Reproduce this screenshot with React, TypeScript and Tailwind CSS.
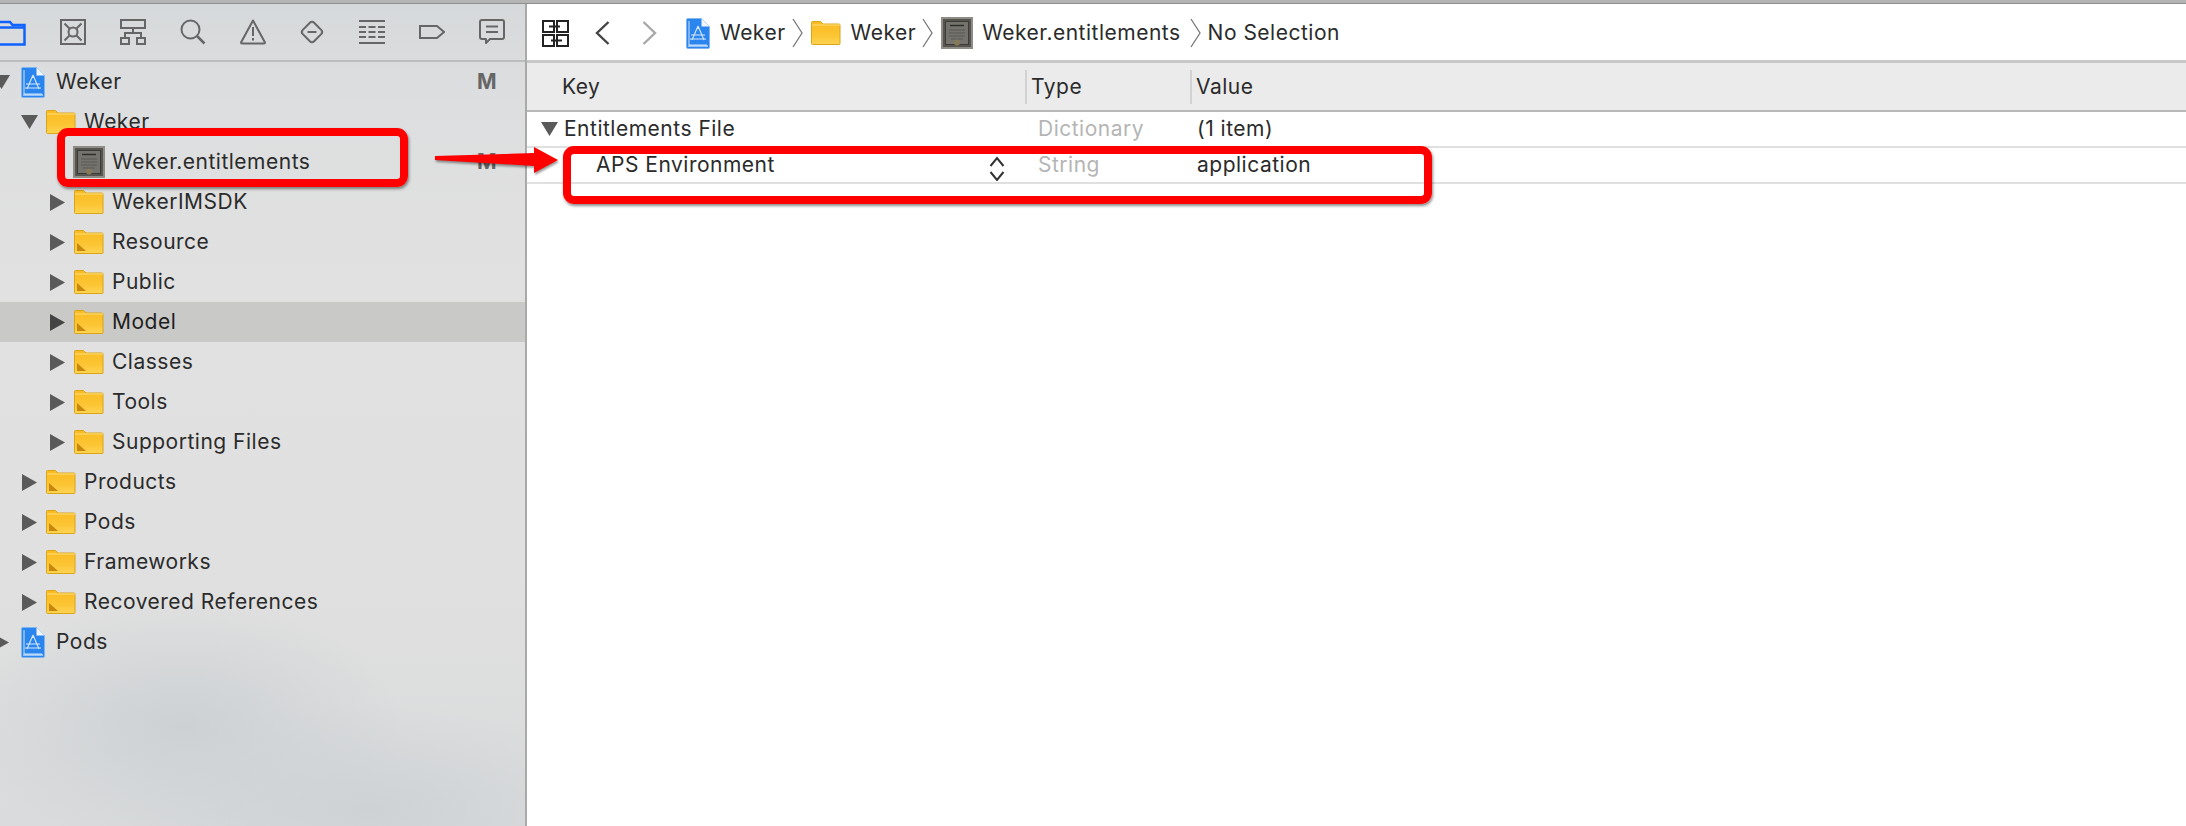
const ui = { fontFamily: 'Inter, "Liberation Sans", sans-serif' };

function FolderIcon({ group = true }: { group?: boolean }) {
  return (
    <svg width="30" height="24" viewBox="0 0 30 24">
      <defs>
        <linearGradient id="folderFill" x1="0" y1="0" x2="0" y2="1">
          <stop offset="0" stopColor="#f9bb22" />
          <stop offset="0.6" stopColor="#fcc533" />
          <stop offset="1" stopColor="#fdd453" />
        </linearGradient>
      </defs>
      <path d="M.5 3V1.500a1 1 0 0 1 1-1h8l2.500 2.500h16a1 1 0 0 1 1 1V22.500a1 1 0 0 1-1 1H1.500a1 1 0 0 1-1-1z" fill="url(#folderFill)" stroke="#dca417" />
      <path d="M1 4h28" stroke="#fee07f" strokeWidth="1" />
      {group && <path d="M3 13l9 8H3z" fill="#c9860f" />}
    </svg>
  );
}

function ProjectIcon() {
  return (
    <svg width="24" height="31" viewBox="0 0 24 31">
      <path d="M1.500.5h14l8 8V29a1.500 1.500 0 0 1-1.500 1.500H2A1.500 1.500 0 0 1 .5 29V2A1.500 1.500 0 0 1 1.500.5z" fill="#2a85ee" stroke="#7fb6ee" />
      <path d="M15.500.5v8h8z" fill="#f2f6fb" />
      <path d="M3 3v24M3 27h18" stroke="#cfe3fa" strokeWidth="1" fill="none" />
      <path d="M12 8l-6 14M12 8l6 14M5 17h14M4 21h16M12 8v3" stroke="#d7e8fb" strokeWidth="1.100" fill="none" />
      <path d="M2 28h20" stroke="#ffffff" strokeWidth="1" />
    </svg>
  );
}

function CertIcon() {
  return (
    <svg width="32" height="32" viewBox="0 0 32 32">
      <rect width="32" height="32" fill="#8e8c85" />
      <rect x="2" y="2" width="28" height="28" fill="#55544f" />
      <rect x="4.500" y="4.500" width="23" height="23" fill="#74736d" stroke="#3c3b38" />
      <path d="M9 8.500h14" stroke="#2c2c2a" strokeWidth="1.400" />
      <path d="M8 13h16M8 16h16M8 19h16M10 22h12" stroke="#5a5954" strokeWidth="1" />
      <circle cx="16" cy="25.500" r="3" fill="#85795a" />
    </svg>
  );
}

function Triangle({ open, dark }: { open?: boolean; dark?: boolean }) {
  const fill = dark ? '#444444' : '#5a5a5a';
  return open ? (
    <svg width="17" height="14" viewBox="0 0 17 14">
      <path d="M0 0h17l-8.500 14z" fill={fill} />
    </svg>
  ) : (
    <svg width="15" height="17" viewBox="0 0 15 17">
      <path d="M0 0l15 8.500-15 8.500z" fill={fill} />
    </svg>
  );
}

const tool = { fill: 'none', stroke: '#666666', strokeWidth: 2 };

const navigatorIcons = [
  <svg key="files" width="27" height="27" viewBox="0 0 27 27" fill="none" stroke="#0f62fe" strokeWidth="2.500" className="-ml-[1px]">
    <path d="M-2 25.500V3h13l2.500 3H25.500v19.500z" />
    <path d="M-2 8.500h27" />
  </svg>,
  <svg key="symbols" width="26" height="26" viewBox="0 0 26 26" {...tool}>
    <rect x="1" y="1" width="24" height="24" />
    <circle cx="13" cy="13" r="4.500" />
    <path d="M4.500 4.500l5 5M21.500 4.500l-5 5M4.500 21.500l5-5M21.500 21.500l-5-5" />
  </svg>,
  <svg key="hierarchy" width="26" height="26" viewBox="0 0 26 26" {...tool}>
    <rect x="1" y="1" width="24" height="8" />
    <rect x="1" y="19" width="8" height="6" />
    <rect x="17" y="19" width="8" height="6" />
    <path d="M13 9v5M5 19v-5h16v5" />
  </svg>,
  <svg key="find" width="26" height="26" viewBox="0 0 26 26" {...tool}>
    <circle cx="10.500" cy="10.500" r="9" />
    <path d="M17 17l7.500 7.500" strokeWidth="2.500" />
  </svg>,
  <svg key="issues" width="26" height="26" viewBox="0 0 26 26" {...tool}>
    <path d="M13 1.500L25 23.500a1 1 0 0 1-1 1H2a1 1 0 0 1-1-1z" strokeLinejoin="round" />
    <path d="M13 8v9M13 19v2.500" />
  </svg>,
  <svg key="tests" width="26" height="26" viewBox="0 0 26 26" {...tool}>
    <rect x="5" y="5" width="16" height="16" rx="3" transform="rotate(45 13 13)" />
    <path d="M8.500 13h9" />
  </svg>,
  <svg key="debug" width="26" height="24" viewBox="0 0 26 24" {...tool}>
    <path d="M0 1h26M0 23h26" />
    <path d="M0 7h7M9.500 7h7M19 7h7M0 12h7M9.500 12h7M19 12h7M0 17h7M9.500 17h7M19 17h7" strokeWidth="1.800" />
  </svg>,
  <svg key="breakpoints" width="26" height="14" viewBox="0 0 26 14" {...tool}>
    <path d="M1 1h17l7 6-7 6H1z" />
  </svg>,
  <svg key="reports" width="26" height="26" viewBox="0 0 26 26" {...tool}>
    <path d="M3 1h20a2 2 0 0 1 2 2v15a2 2 0 0 1-2 2H11l-4 4v-4H3a2 2 0 0 1-2-2V3a2 2 0 0 1 2-2z" strokeLinejoin="round" />
    <path d="M7 7.500h12M7 13h12" />
  </svg>,
];

type NavRow = {
  label: string;
  margin: string;
  kind: 'project' | 'folder' | 'plain' | 'cert';
  open?: boolean;
  badge?: boolean;
  selected?: boolean;
};

const rows: NavRow[] = [
  { label: 'Weker', margin: '-ml-[7px]', kind: 'project', open: true, badge: true },
  { label: 'Weker', margin: 'ml-[21px]', kind: 'plain', open: true },
  { label: 'Weker.entitlements', margin: 'ml-[49px]', kind: 'cert', badge: true },
  { label: 'WekerIMSDK', margin: 'ml-[49px]', kind: 'plain' },
  { label: 'Resource', margin: 'ml-[49px]', kind: 'folder' },
  { label: 'Public', margin: 'ml-[49px]', kind: 'folder' },
  { label: 'Model', margin: 'ml-[49px]', kind: 'folder', selected: true },
  { label: 'Classes', margin: 'ml-[49px]', kind: 'folder' },
  { label: 'Tools', margin: 'ml-[49px]', kind: 'folder' },
  { label: 'Supporting Files', margin: 'ml-[49px]', kind: 'folder' },
  { label: 'Products', margin: 'ml-[21px]', kind: 'folder' },
  { label: 'Pods', margin: 'ml-[21px]', kind: 'folder' },
  { label: 'Frameworks', margin: 'ml-[21px]', kind: 'folder' },
  { label: 'Recovered References', margin: 'ml-[21px]', kind: 'folder' },
  { label: 'Pods', margin: '-ml-[7px]', kind: 'project' },
];

function NavigatorRow({ row }: { row: NavRow }) {
  return (
    <div className={`flex h-[40px] items-center ${row.selected ? 'bg-[#c9c9c7] text-[#1e1e1e]' : ''}`}>
      <div className={`flex h-full w-[17px] shrink-0 items-center justify-center ${row.margin}`}>
        {row.kind !== 'cert' && <Triangle open={row.open} dark={row.selected} />}
      </div>
      <div className="flex h-full w-[46px] shrink-0 items-center justify-center">
        {row.kind === 'project' && <ProjectIcon />}
        {row.kind === 'folder' && <FolderIcon />}
        {row.kind === 'plain' && <FolderIcon group={false} />}
        {row.kind === 'cert' && <CertIcon />}
      </div>
      <span className="whitespace-nowrap">{row.label}</span>
      {row.badge && <span className="ml-auto pr-[28px] font-bold text-[#666666]">M</span>}
    </div>
  );
}

function Crumb() {
  return (
    <svg width="11" height="30" viewBox="0 0 11 30" fill="none" stroke="#777777" strokeWidth="1.300">
      <path d="M1 1l9 14-9 14" />
    </svg>
  );
}

export default function App() {
  return (
    <div className="relative flex h-[826px] w-[2186px] flex-col overflow-hidden bg-white text-[21px] tracking-[0.5px] text-[#2b2b2b]" style={ui}>
      <div className="h-[4px] shrink-0 border-b border-[#8f8f8f] bg-[#b4b4b4]" />
      <div className="flex min-h-0 flex-1">
        {/* Navigator */}
        <div className="w-[527px] shrink-0 overflow-hidden border-r-2 border-[#a9a9a9] bg-[radial-gradient(ellipse_42%_15%_at_35%_88%,#cdd1d4_0%,rgba(205,209,212,0)_100%),radial-gradient(ellipse_48%_13%_at_70%_98%,#ced2d5_0%,rgba(206,210,213,0)_100%),linear-gradient(180deg,#d6d9db_0%,#dddedf_12%,#e1e1e1_35%,#e0e0e0_70%,#d9dbdc_100%)]">
          <div className="flex h-[58px] items-center justify-between border-b-2 border-[#bcbcbc] pr-[20px]">
            {navigatorIcons}
          </div>
          <div>
            {rows.map((row, i) => (
              <NavigatorRow key={i} row={row} />
            ))}
          </div>
        </div>

        {/* Editor */}
        <div className="flex min-w-0 flex-1 flex-col">
          <div className="flex h-[56px] shrink-0 items-center pt-[2px] pl-[15px]">
            <svg width="27" height="27" viewBox="0 0 27 27" fill="none" stroke="#222222" strokeWidth="2">
              <rect x="1" y="1" width="11" height="11" />
              <rect x="15" y="1" width="11" height="11" />
              <rect x="1" y="15" width="11" height="11" />
              <rect x="15" y="15" width="11" height="11" />
              <path d="M7 6.500h11M20 20.500H9" />
            </svg>
            <svg width="15" height="24" viewBox="0 0 15 24" fill="none" stroke="#444444" strokeWidth="2.400" className="ml-[26px]">
              <path d="M13.500 1L2 12l11.500 11" />
            </svg>
            <svg width="15" height="24" viewBox="0 0 15 24" fill="none" stroke="#a8a8a8" strokeWidth="2.400" className="ml-[32px]">
              <path d="M1.500 1L13 12 1.500 23" />
            </svg>
            <span className="ml-[29px] flex"><ProjectIcon /></span>
            <span className="ml-[10px]">Weker</span>
            <span className="ml-[6px] flex"><Crumb /></span>
            <span className="ml-[8px] flex"><FolderIcon group={false} /></span>
            <span className="ml-[10px]">Weker</span>
            <span className="ml-[6px] flex"><Crumb /></span>
            <span className="ml-[8px] flex"><CertIcon /></span>
            <span className="ml-[9px]">Weker.entitlements</span>
            <span className="ml-[9px] flex"><Crumb /></span>
            <span className="ml-[7px]">No Selection</span>
          </div>

          <div className="grid h-[52px] shrink-0 grid-cols-[498px_165px_1fr] items-center border-t-[3px] border-b-2 border-t-[#c8c8c8] border-b-[#b8b8b8] bg-[#ebebeb]">
            <span className="pl-[35px]">Key</span>
            <span className="flex h-[34px] items-center border-l-2 border-[#d2d2d2] pl-[4px]">Type</span>
            <span className="flex h-[34px] items-center border-l-2 border-[#d2d2d2] pl-[4px]">Value</span>
          </div>

          <div className="grid h-[36px] shrink-0 grid-cols-[498px_165px_1fr] items-center border-b-2 border-[#e0e0e0]">
            <span className="flex items-center pl-[14px]">
              <Triangle open />
              <span className="ml-[6px]">Entitlements File</span>
            </span>
            <span className="pl-[13px] text-[#b5b5b5]">Dictionary</span>
            <span className="pl-[7px]">(1 item)</span>
          </div>
          <div className="grid h-[36px] shrink-0 grid-cols-[498px_165px_1fr] items-center border-b-2 border-[#e0e0e0]">
            <span className="flex items-center justify-between pr-[20px] pl-[69px]">
              APS Environment
              <svg width="16" height="32" viewBox="0 0 16 32" fill="none" stroke="#333333" strokeWidth="2">
                <path d="M1.500 17L8 9l6.500 8M1.500 23L8 31l6.500-8" />
              </svg>
            </span>
            <span className="pl-[13px] text-[#b5b5b5]">String</span>
            <span className="pl-[7px]">application</span>
          </div>
        </div>
      </div>

      {/* Annotations drawn over the screenshot */}
      <div className="absolute top-[128px] left-[57px] h-[59px] w-[351px] rounded-[11px] border-[8px] border-[#ff0000] shadow-[1px_2px_3px_rgba(0,0,0,0.45)]" />
      <div className="absolute top-[146px] left-[563px] h-[58px] w-[869px] rounded-[11px] border-[8px] border-[#ff0000] shadow-[1px_2px_3px_rgba(0,0,0,0.45)]" />
      <svg width="140" height="40" viewBox="0 0 140 40" className="absolute top-[142px] left-[430px] drop-shadow-[1px_2px_1px_rgba(0,0,0,0.4)]">
        <path d="M5 14l99-3 0-6 24 13-24 13 0-7-99-6z" fill="#ff0000" />
      </svg>
    </div>
  );
}
